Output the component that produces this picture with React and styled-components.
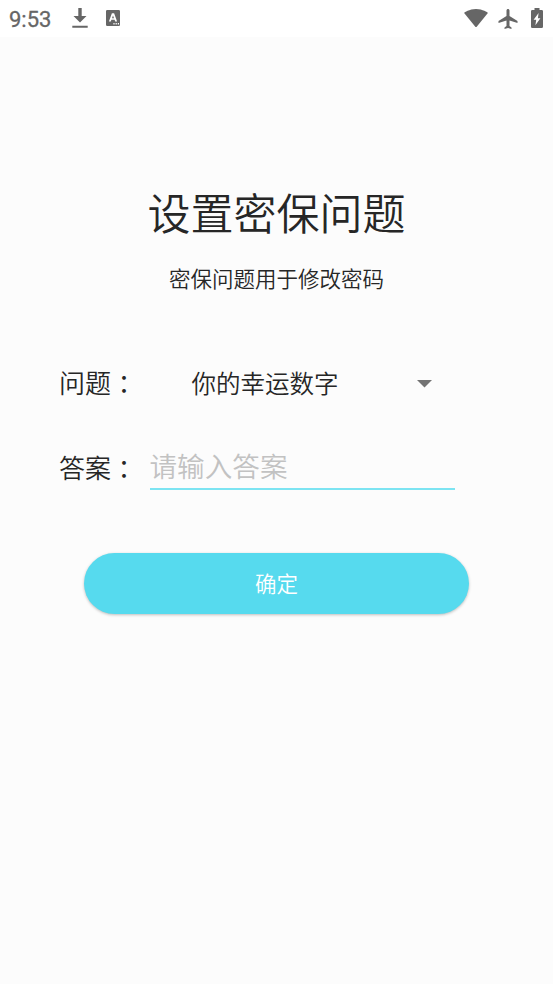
import styled, { createGlobalStyle } from "styled-components";

const App = () => {
  return (
    <>
      <GlobalStyle />
      <Screen>
        <StatusBar>
          <Clock>9:53</Clock>
          <DownloadIcon viewBox="0 0 16 20">
            <path d="M6.300 0h3.400v8h4.800L8 14.500 1.500 8h4.800zM.3 17.700h15.400v2H.3z" />
          </DownloadIcon>
          <KeyboardIcon viewBox="0 0 14 16">
            <path
              fillRule="evenodd"
              d="M1.200 0h11.600Q14 0 14 1.200v13.600q0 1.200-1.200 1.200H1.200Q0 16 0 14.800V1.200Q0 0 1.200 0zM5.900 3.200 2.900 11.400h1.900l.6-1.700h3.200l.6 1.700h1.900L8.100 3.200zM7 5.400l1 2.800H6zM7.400 13v1.400h1.200V13zm2.200 0v1.400h1.200V13zm2.200 0v1.400H13V13z"
            />
          </KeyboardIcon>
          <Spacer />
          <WifiIcon viewBox="0 0 24 18.6">
            <path d="M12 18.6.1 3.9C.6 3.5 5.1 0 12 0s11.4 3.5 11.9 3.9z" />
          </WifiIcon>
          <PlaneIcon viewBox="2 2 19 20">
            <path d="M21 16v-2l-8-5V3.500C13 2.670 12.330 2 11.500 2S10 2.670 10 3.500V9l-8 5v2l8-2.500V19l-2 1.500V22l3.500-1 3.500 1v-1.500L13 19v-5.500z" />
          </PlaneIcon>
          <BatteryIcon viewBox="0 0 12 20">
            <path
              fillRule="evenodd"
              d="M3.500 0h5v2h2.200Q12 2 12 3.300v15.400q0 1.300-1.300 1.300H1.300Q0 20 0 18.700V3.300Q0 2 1.300 2h2.200zM7.600 5 2.600 11.800h2.600L4.400 17.300 9.400 10.300H6.900z"
            />
          </BatteryIcon>
        </StatusBar>
        <Title>设置密保问题</Title>
        <Subtitle>密保问题用于修改密码</Subtitle>
        <Form>
          <Row $height={60}>
            <Label>
              问题<Colon>：</Colon>
            </Label>
            <Spinner type="button">
              你的幸运数字
              <Caret viewBox="0 0 15 8">
                <path d="M0 0h15L7.500 7.600z" />
              </Caret>
            </Spinner>
          </Row>
          <Row $height={110}>
            <Label>
              答案<Colon>：</Colon>
            </Label>
            <AnswerInput placeholder="请输入答案" />
          </Row>
        </Form>
        <ConfirmButton type="button">确定</ConfirmButton>
      </Screen>
    </>
  );
};

const GlobalStyle = createGlobalStyle`
  * {
    box-sizing: border-box;
  }

  body {
    margin: 0;
    background: #fcfcfc;
    color: #262626;
    font-family: "Noto Sans CJK SC", sans-serif;
    font-weight: 350;
  }

  button,
  input {
    font-family: inherit;
    font-weight: inherit;
    color: inherit;
    border: 0;
    background: none;
    outline: none;
  }
`;

const Screen = styled.main`
  width: 553px;
  height: 984px;
  display: flex;
  flex-direction: column;
  align-items: center;
  overflow: hidden;
  background: #fcfcfc;
`;

const StatusBar = styled.header`
  width: 100%;
  height: 37px;
  padding: 0 9px;
  display: flex;
  align-items: center;
  background: #fff;
  color: #666;

  svg {
    fill: currentColor;
  }
`;
const Clock = styled.span`
  width: 63px;
  padding-top: 2px;
  font-family: Roboto, sans-serif;
  font-size: 22px;
  font-weight: 400;
  line-height: 25px;
  -webkit-text-stroke: 0.3px currentColor;
`;
const Spacer = styled.div`
  flex: 1;
`;
const DownloadIcon = styled.svg`
  width: 16px;
  height: 20px;
  margin-bottom: 1px;
`;
const KeyboardIcon = styled.svg`
  width: 14px;
  height: 16px;
  margin: 0 0 1px 18px;
`;
const WifiIcon = styled.svg`
  width: 24px;
  height: 18.6px;
  margin-bottom: 1px;
`;
const PlaneIcon = styled.svg`
  width: 20px;
  height: 20px;
  margin-left: 10px;
`;
const BatteryIcon = styled.svg`
  width: 12px;
  height: 20px;
  margin: 0 1px 1px 13px;
`;

const Title = styled.h1`
  margin: 142px 0 0;
  font-size: 43px;
  font-weight: inherit;
  line-height: 64px;
`;
const Subtitle = styled.p`
  margin: 19px 0 0;
  font-size: 21.5px;
  line-height: 32px;
`;

const Form = styled.form`
  width: 100%;
  margin-top: 59px;
  padding-left: 59px;
`;
const Row = styled.div`
  height: ${(props) => props.$height}px;
  display: flex;
  align-items: center;
`;
const Label = styled.label`
  width: 90.5px;
  flex: none;
  padding-bottom: 2px;
  font-size: 26px;
  line-height: 38px;
  white-space: nowrap;
`;
// The TC face centres the full-width colon in its cell
const Colon = styled.span`
  font-family: "Noto Sans CJK TC", sans-serif;
  line-height: 1;
  vertical-align: -1px;
`;
const Spinner = styled.button`
  width: 282px;
  padding: 0 0 0 42px;
  display: flex;
  align-items: center;
  justify-content: space-between;
  font-size: 24.5px;
  line-height: 36px;
`;
const Caret = styled.svg`
  width: 15px;
  height: 8px;
  margin-top: 2px;
  fill: #737373;
`;
const AnswerInput = styled.input`
  width: 305.5px;
  height: 47px;
  margin-bottom: 4px;
  padding: 0;
  border-bottom: 2px solid #7ce4f2;
  font-size: 27.6px;

  &::placeholder {
    color: #c2c2c2;
    opacity: 1;
  }
`;

const ConfirmButton = styled.button`
  width: 385px;
  height: 61px;
  margin-top: 30px;
  padding: 0 0 2px;
  border-radius: 31px;
  background: #56daee;
  color: #fff;
  font-size: 21.5px;
  box-shadow: 0 1px 3px rgba(0, 0, 0, 0.25);
`;

export default App;
